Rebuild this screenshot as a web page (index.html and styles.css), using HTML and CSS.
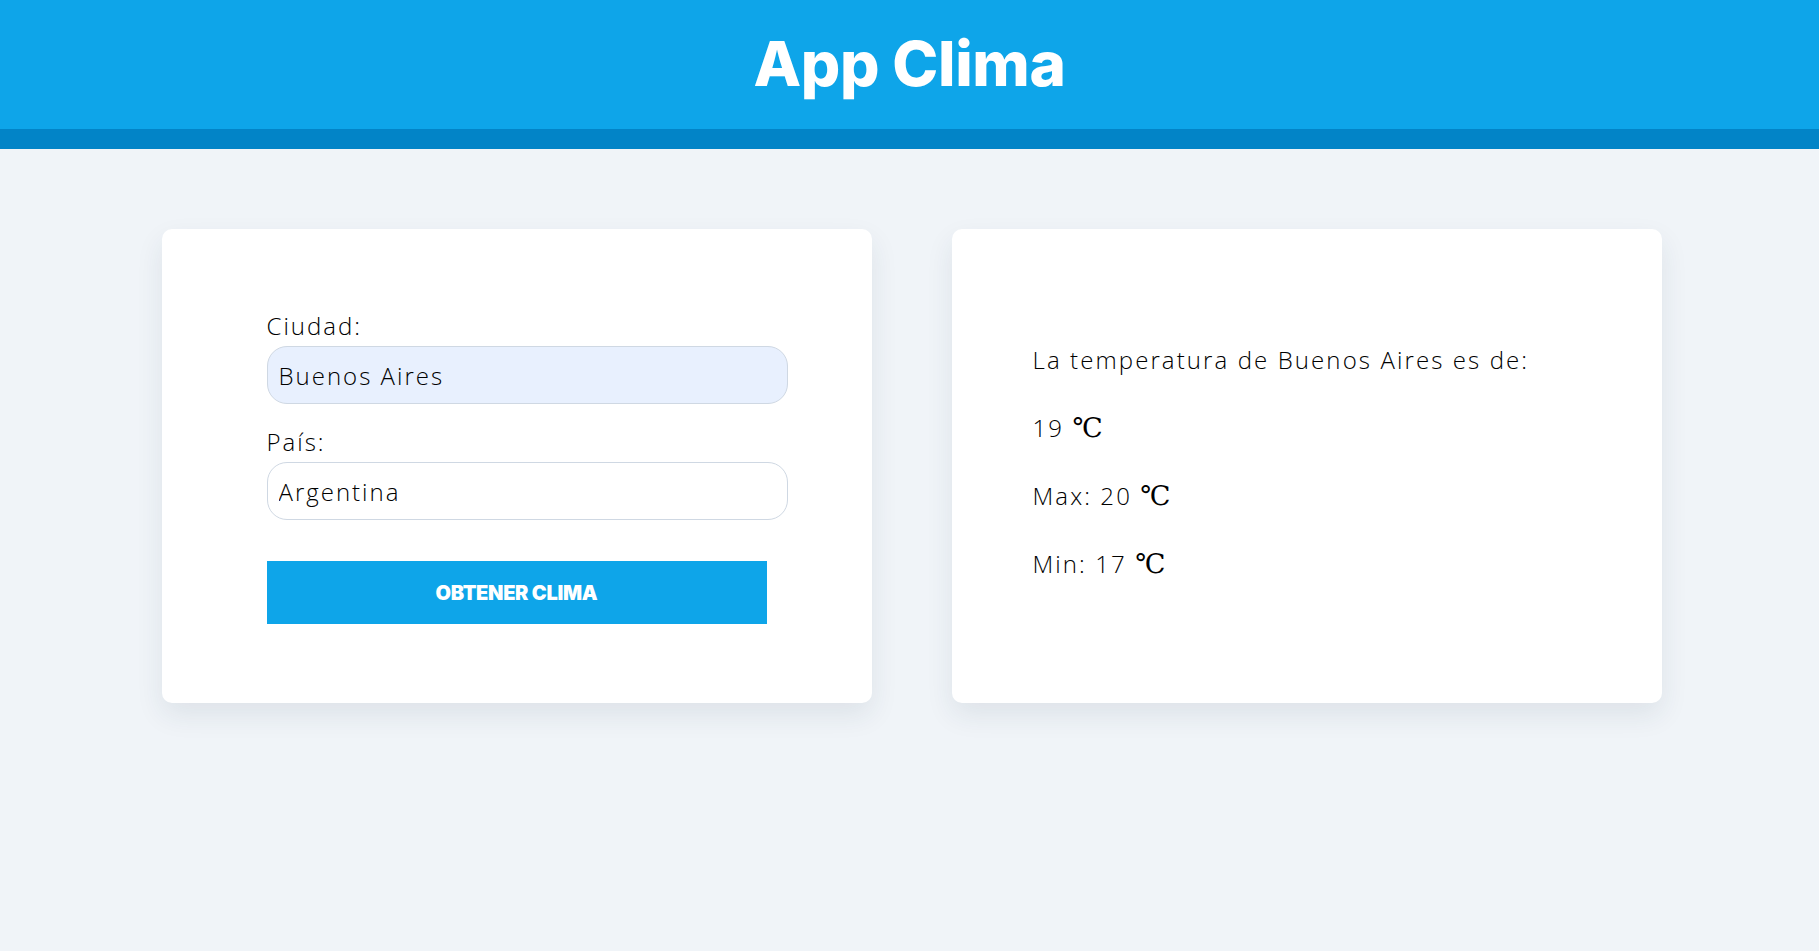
FILE: index.html
```html
<!DOCTYPE html>
<html lang="es">
<head>
<meta charset="utf-8">
<title>App Clima</title>
<link rel="stylesheet" href="styles.css">
</head>
<body>
<header class="site-header">
  <h1 class="title">App Clima</h1>
</header>
<main class="container">
  <section class="card form-card">
    <form class="form">
      <label class="label" for="ciudad">Ciudad:</label>
      <input class="input input-filled" id="ciudad" type="text" value="Buenos Aires">
      <label class="label label-second" for="pais">País:</label>
      <input class="input" id="pais" type="text" value="Argentina">
      <button class="button" type="button">OBTENER CLIMA</button>
    </form>
  </section>
  <section class="card result-card">
    <div class="result">
      <p class="line">La temperatura de Buenos Aires es de:</p>
      <p class="line">19 <span class="deg">℃</span></p>
      <p class="line">Max: 20 <span class="deg">℃</span></p>
      <p class="line">Min: 17 <span class="deg">℃</span></p>
    </div>
  </section>
</main>
</body>
</html>
```

FILE: styles.css
```css
* { box-sizing: border-box; }

body {
  margin: 0;
  background: #f0f4f8;
  font-family: "Open Sans", "Lato", sans-serif;
  font-weight: 300;
  color: #000000;
  min-height: 951px;
}

.site-header {
  background: #0ea5e9;
  border-bottom: 20px solid #0284c7;
  height: 149px;
  padding-top: 34px;
  text-align: center;
}

.title {
  margin: 0;
  font-family: "Inter", sans-serif;
  font-weight: 800;
  font-size: 62px;
  line-height: 60px;
  color: #ffffff;
  letter-spacing: -0.4px;
}

.container {
  display: grid;
  grid-template-columns: 1fr 1fr;
  gap: 80px;
  max-width: 1500px;
  margin: 80px auto 0;
  transform: translateX(2px);
}

.card {
  background: #ffffff;
  border-radius: 10px;
  box-shadow: 0 12px 28px rgba(30, 50, 80, 0.09);
  display: flex;
  align-items: center;
}

.form-card {
  padding: 82px 0 79px 105px;
}

.form {
  display: flex;
  flex-direction: column;
  width: 521px;
}

.label {
  font-size: 24px;
  line-height: 30px;
  letter-spacing: 2px;
  margin-bottom: 5px;
}

.label-second {
  margin-top: 23px;
}

.input {
  height: 58px;
  border: 1px solid #cfd8e3;
  border-radius: 20px;
  padding: 0 11px;
  font-family: "Open Sans", "Lato", sans-serif;
  font-weight: 300;
  font-size: 24px;
  letter-spacing: 2px;
  color: #000000;
  background: #ffffff;
  outline: none;
}

.input-filled {
  background: #e8f0fe;
}

.button {
  margin-top: 41px;
  width: 500px;
  height: 63px;
  border: none;
  background: #0ea5e9;
  color: #ffffff;
  font-family: "Inter", sans-serif;
  font-weight: 900;
  font-size: 20px;
  letter-spacing: -0.3px;
  cursor: pointer;
}

.result-card {
  padding: 0 0 0 81px;
}

.result {
  display: flex;
  flex-direction: column;
  gap: 32px;
  padding-bottom: 8px;
}

.line {
  margin: 0;
  font-size: 24px;
  line-height: 36px;
  letter-spacing: 2.1px;
}

.deg {
  font-family: "Liberation Serif", "DejaVu Serif", serif;
  font-weight: 400;
  font-size: 27px;
  letter-spacing: 0;
}
```
